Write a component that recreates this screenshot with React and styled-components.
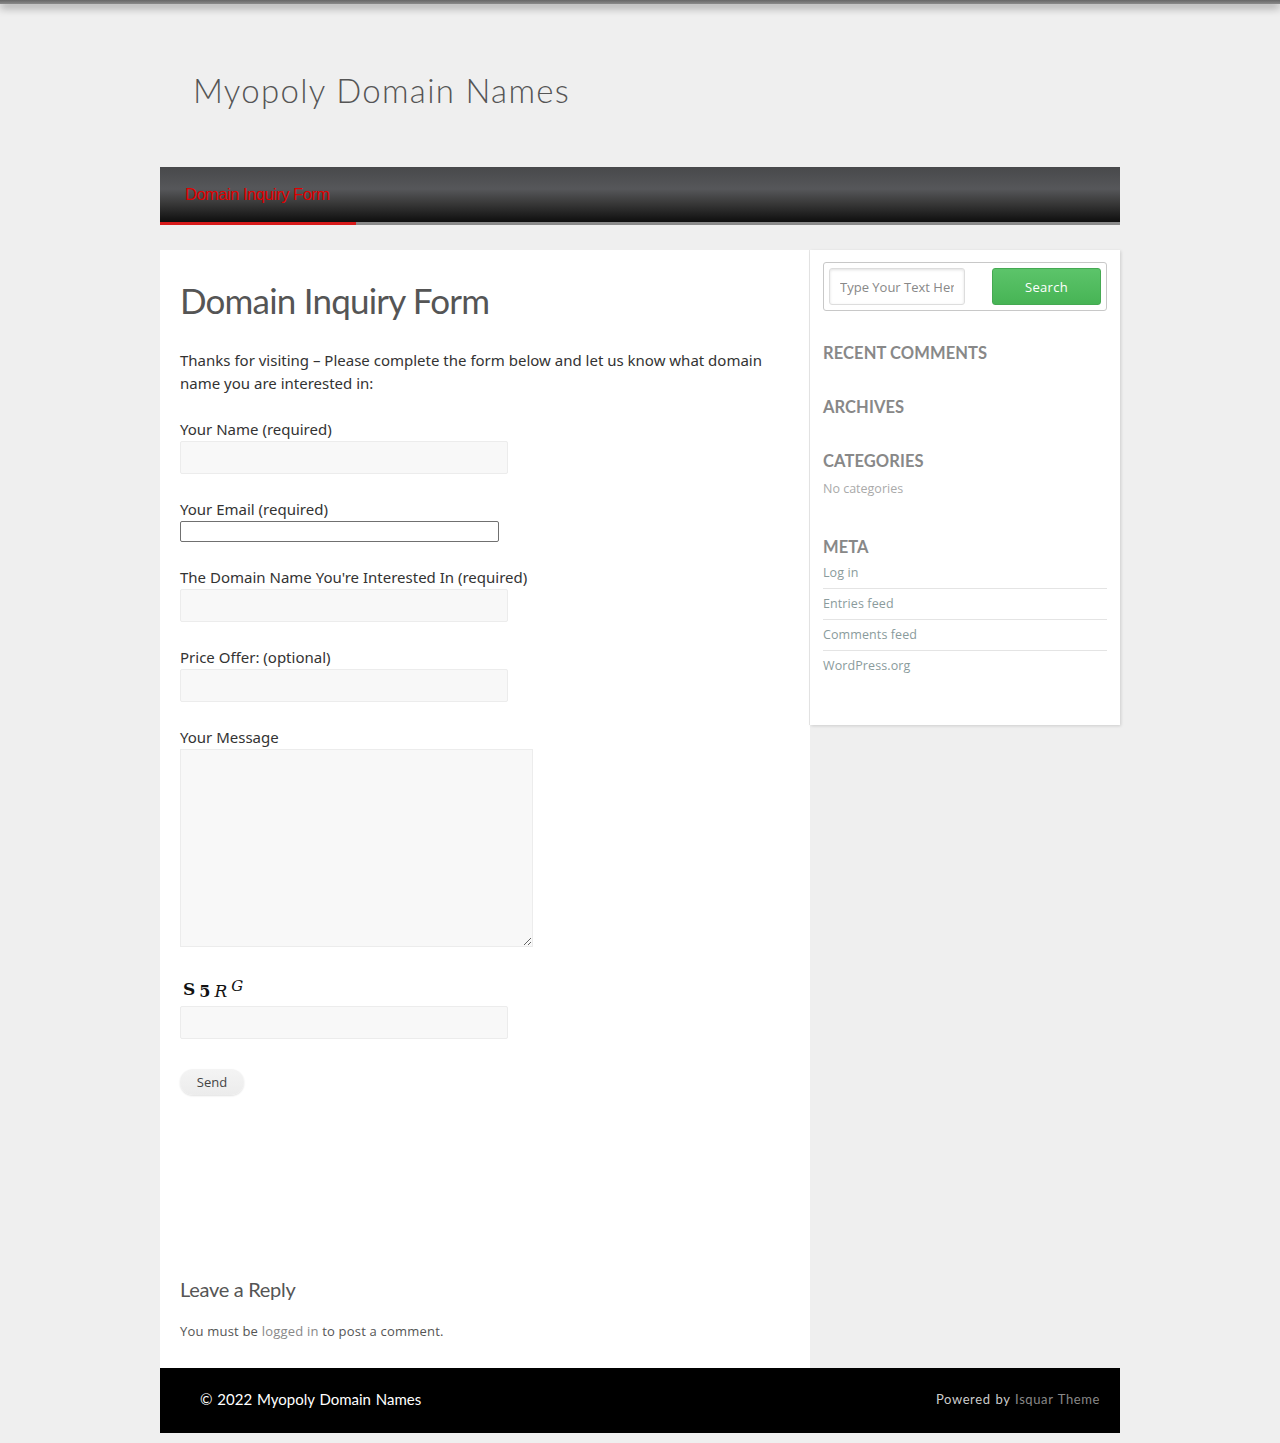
import React from 'react';
import styled, { createGlobalStyle } from 'styled-components';

const GlobalStyle = createGlobalStyle`
  body {
    margin: 0;
    background: #efefef;
    font-family: "Open Sans", sans-serif;
  }
`;

const TopShadow = styled.div`
  height: 4px;
  background: linear-gradient(#666, #8a8a8a);
  box-shadow: 0 3px 9px rgba(0, 0, 0, 0.5);
`;

const Wrap = styled.div`
  width: 960px;
  margin: 0 auto;
  padding-bottom: 10px;
`;

const Header = styled.header`
  height: 163px;
  display: flex;
  align-items: center;
  padding: 8px 33px 0;
  box-sizing: border-box;
`;

const SiteTitle = styled.h1`
  margin: 0;
  font-family: Lato, sans-serif;
  font-weight: 300;
  font-size: 33px;
  letter-spacing: 1.3px;
  color: #555;
`;

const Nav = styled.nav`
  height: 55px;
  background: linear-gradient(to bottom, #48494b 0%, #56575a 40%, #3a3a3a 65%, #0e0e0e 100%);
  border-bottom: 3px solid #8a8a8a;
  display: flex;
`;

const NavItem = styled.a`
  width: 196px;
  box-sizing: border-box;
  padding-left: 25px;
  display: flex;
  align-items: center;
  color: #e00000;
  font-family: "Liberation Sans", sans-serif;
  font-size: 16.5px;
  letter-spacing: -0.5px;
  text-decoration: none;
  margin-bottom: -3px;
  border-bottom: 3px solid ${p => (p.$active ? '#d71a1a' : 'transparent')};
`;

const Body = styled.div`
  display: flex;
  align-items: flex-start;
  margin-top: 25px;
`;

const Main = styled.main`
  width: 650px;
  min-height: 1118px;
  box-sizing: border-box;
  background: #fff;
  padding: 29px 20px 20px;
  display: flex;
  flex-direction: column;
`;

const PageTitle = styled.h2`
  margin: 0 0 28px;
  font-family: Lato, sans-serif;
  font-weight: 400;
  font-size: 35px;
  letter-spacing: -0.8px;
  color: #555;
`;

const Text = styled.p`
  margin: 0 0 24px;
  font-family: "Noto Sans", sans-serif;
  font-size: 15px;
  line-height: 23px;
  color: #333;
`;

const Field = styled.div`
  margin-bottom: ${p => p.$gap || 25}px;
`;

const Label = styled.label`
  display: block;
  font-family: "Noto Sans", sans-serif;
  font-size: 15px;
  color: #333;
  line-height: 20px;
  margin-bottom: 2px;
`;

const Input = styled.input`
  display: block;
  width: 328px;
  height: 33px;
  box-sizing: border-box;
  background: #f8f8f8;
  border: 1px solid #ececec;
  border-radius: 2px;
  outline: none;
`;

const PlainInput = styled.input`
  display: block;
  width: 319px;
  height: 21px;
  box-sizing: border-box;
  background: #fff;
  border: 1px solid #707070;
  border-radius: 2px;
  outline: none;
`;

const TextArea = styled.textarea`
  display: block;
  width: 353px;
  height: 198px;
  box-sizing: border-box;
  background: #f8f8f8;
  border: 1px solid #ececec;
  resize: vertical;
`;

const Captcha = styled.div`
  display: flex;
  align-items: flex-end;
  gap: 4px;
  padding-left: 3px;
  height: 26px;
  margin-bottom: 5px;
  font-family: "DejaVu Serif", serif;
  color: #111;
`;

const CaptchaChar = styled.span`
  font-size: ${p => p.$size}px;
  font-weight: ${p => (p.$bold ? 700 : 400)};
  font-style: ${p => (p.$italic ? 'italic' : 'normal')};
  transform: translateY(${p => p.$dy || 0}px);
`;

const SendButton = styled.button`
  align-self: flex-start;
  width: 64px;
  height: 26px;
  border: none;
  border-radius: 13px;
  background: linear-gradient(#f4f4f4, #ececec);
  box-shadow: 0 1px 2px rgba(0,0,0,0.12);
  font-family: "Open Sans", sans-serif;
  font-size: 13px;
  color: #444;
  margin-top: 30px;
`;

const ReplyTitle = styled.h3`
  margin: 182px 0 21px;
  font-family: Lato, sans-serif;
  font-weight: 400;
  font-size: 20px;
  letter-spacing: -0.3px;
  color: #555;
`;

const SmallText = styled.p`
  margin: 0;
  font-family: "Open Sans", sans-serif;
  font-size: 13px;
  letter-spacing: 0.2px;
  color: #555;
`;

const MutedLink = styled.a`
  color: #888;
  text-decoration: none;
`;

const Sidebar = styled.aside`
  width: 310px;
  box-sizing: border-box;
  background: #fff;
  padding: 12px 13px 43px;
  box-shadow: 1px 1px 3px rgba(0,0,0,0.14), -1px 0 0 #e8e8e8;
`;

const SearchBox = styled.form`
  display: flex;
  justify-content: space-between;
  align-items: center;
  height: 49px;
  box-sizing: border-box;
  padding: 0 5px;
  border: 1px solid #c8c8c8;
  border-radius: 3px;
  margin: 0 0 33px;
`;

const SearchInput = styled.input`
  width: 136px;
  height: 37px;
  box-sizing: border-box;
  border: 1px solid #ddd;
  border-radius: 3px;
  box-shadow: inset 0 1px 3px rgba(0,0,0,0.12);
  padding: 0 10px;
  font-family: "Open Sans", sans-serif;
  font-size: 13px;
  color: #888;
  &::placeholder { color: #888; }
`;

const SearchButton = styled.button`
  width: 109px;
  height: 37px;
  border: 1px solid #45a952;
  border-radius: 3px;
  background: linear-gradient(#5cc46a, #47b455);
  color: #fff;
  font-family: "Open Sans", sans-serif;
  font-size: 13px;
  letter-spacing: 0.3px;
`;

const WidgetTitle = styled.h4`
  margin: 0 0 ${p => p.$mb || 36}px;
  font-family: Lato, sans-serif;
  font-weight: 700;
  font-size: 16.5px;
  letter-spacing: 0.1px;
  color: #888;
  text-transform: uppercase;
  line-height: 18px;
`;

const Muted = styled.p`
  margin: -26px 0 41px;
  font-family: "Open Sans", sans-serif;
  font-size: 12.5px;
  color: #aaa;
`;

const LinkList = styled.ul`
  list-style: none;
  margin: -6px 0 0;
  padding: 0;
`;

const LinkItem = styled.li`
  border-bottom: 1px solid ${p => (p.$last ? 'transparent' : '#e4e4e4')};
  padding: 5px 0 6px;
  font-family: "Open Sans", sans-serif;
  font-size: 12.5px;
  line-height: 19px;
  letter-spacing: 0.1px;
  a { color: #8a9b9c; text-decoration: none; }
`;

const Footer = styled.footer`
  height: 65px;
  box-sizing: border-box;
  background: #000;
  display: flex;
  align-items: center;
  justify-content: space-between;
  padding: 0 20px 3px 40px;
  font-family: Lato, sans-serif;
`;

const Copy = styled.span`
  color: #fff;
  font-size: 15px;
  word-spacing: 1px;
`;

const Powered = styled.span`
  color: #ccc;
  font-size: 13px;
  letter-spacing: 0.6px;
  word-spacing: 1px;
  a { color: #888; text-decoration: none; }
`;

const meta = ['Log in', 'Entries feed', 'Comments feed', 'WordPress.org'];

export default function App() {
  return (
    <>
      <GlobalStyle />
      <TopShadow />
      <Wrap>
        <Header>
          <SiteTitle>Myopoly Domain Names</SiteTitle>
        </Header>
        <Nav>
          <NavItem $active href="#">Domain Inquiry Form</NavItem>
        </Nav>
        <Body>
          <Main>
            <PageTitle>Domain Inquiry Form</PageTitle>
            <Text>
              Thanks for visiting – Please complete the form below and let us know what domain name you are interested in:
            </Text>
            <Field>
              <Label>Your Name (required)</Label>
              <Input />
            </Field>
            <Field>
              <Label>Your Email (required)</Label>
              <PlainInput />
            </Field>
            <Field>
              <Label>The Domain Name You're Interested In (required)</Label>
              <Input />
            </Field>
            <Field>
              <Label>Price Offer: (optional)</Label>
              <Input />
            </Field>
            <Field $gap={28}>
              <Label>Your Message</Label>
              <TextArea />
            </Field>
            <Captcha>
              <CaptchaChar $size={17} $bold $dy={-2}>S</CaptchaChar>
              <CaptchaChar $size={16} $bold>5</CaptchaChar>
              <CaptchaChar $size={17} $italic>R</CaptchaChar>
              <CaptchaChar $size={15} $italic $dy={-6}>G</CaptchaChar>
            </Captcha>
            <Input />
            <SendButton>Send</SendButton>
            <ReplyTitle>Leave a Reply</ReplyTitle>
            <SmallText>
              You must be <MutedLink href="#">logged in</MutedLink> to post a comment.
            </SmallText>
          </Main>
          <Sidebar>
            <SearchBox>
              <SearchInput placeholder="Type Your Text Here" />
              <SearchButton type="button">Search</SearchButton>
            </SearchBox>
            <WidgetTitle>Recent Comments</WidgetTitle>
            <WidgetTitle>Archives</WidgetTitle>
            <WidgetTitle>Categories</WidgetTitle>
            <Muted>No categories</Muted>
            <WidgetTitle $mb={8}>Meta</WidgetTitle>
            <LinkList>
              {meta.map((m, i) => (
                <LinkItem key={m} $last={i === meta.length - 1}>
                  <a href="#">{m}</a>
                </LinkItem>
              ))}
            </LinkList>
          </Sidebar>
        </Body>
        <Footer>
          <Copy>© 2022 Myopoly Domain Names</Copy>
          <Powered>
            Powered by <a href="#">Isquar Theme</a>
          </Powered>
        </Footer>
      </Wrap>
    </>
  );
}
